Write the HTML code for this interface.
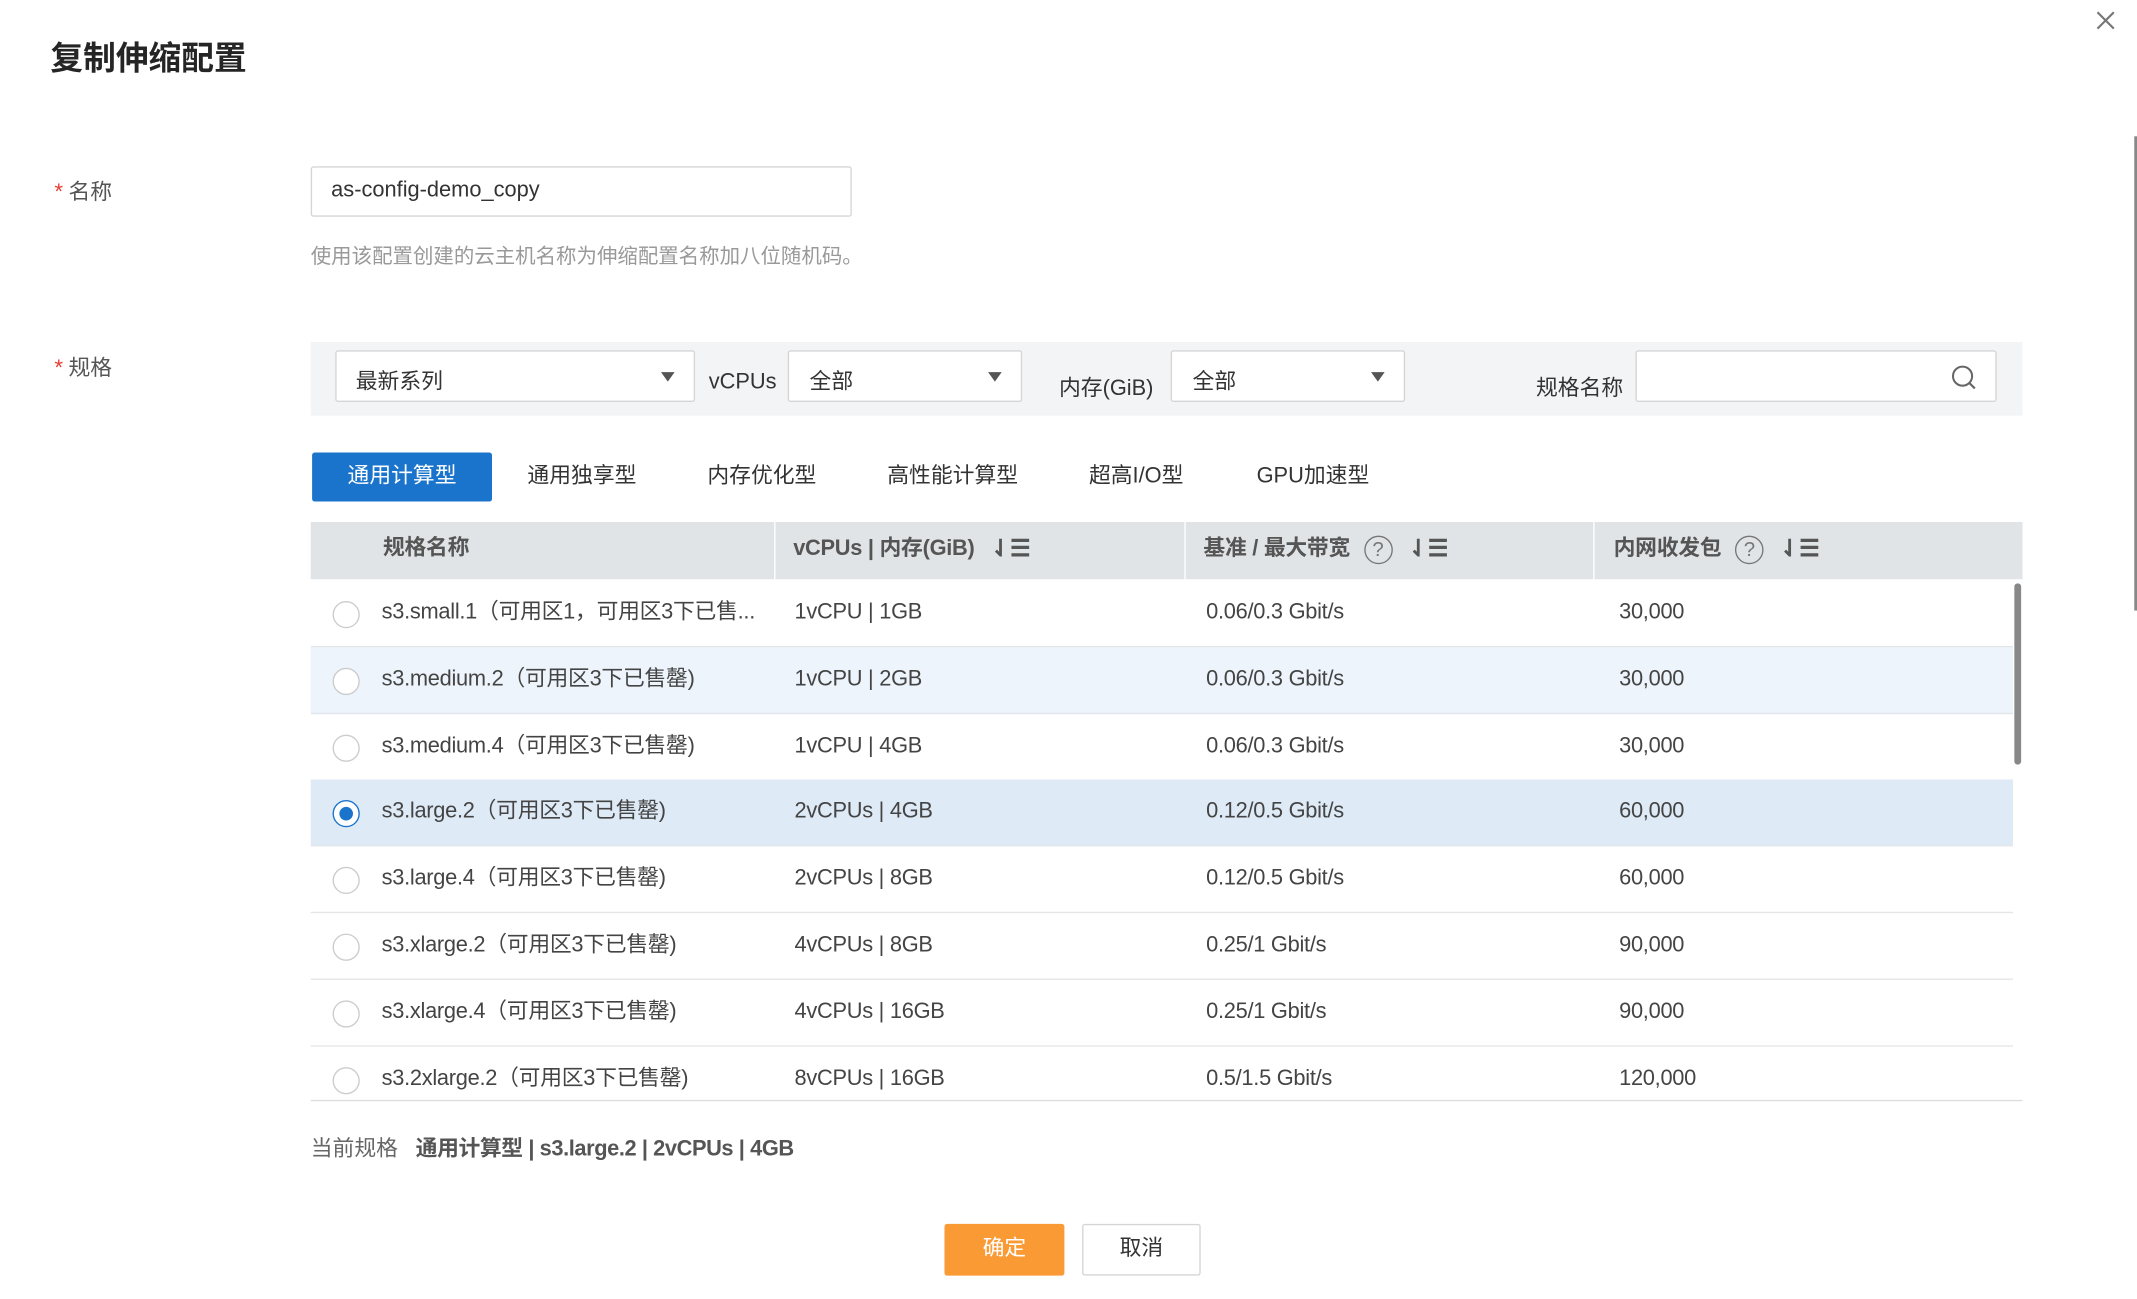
<!DOCTYPE html>
<html><head><meta charset="utf-8">
<style>
html,body{margin:0;padding:0;background:#fff;width:2137px;height:1299px;overflow:hidden}
#w{position:absolute;left:0;top:0;width:1568px;height:953px;transform:scale(1.36288);transform-origin:0 0;font-family:"Liberation Sans","Noto Sans CJK SC",sans-serif;color:#333}
.a{position:absolute;white-space:nowrap}
.lbl{font-size:16px;color:#555}
.req{color:#e8392f;margin-right:4px}
.box{position:absolute;background:#fff;border:1px solid #d5d5d5;border-radius:2px;box-sizing:border-box}
.arr{position:absolute;width:0;height:0;border-left:5px solid transparent;border-right:5px solid transparent;border-top:7px solid #555}
.tab{position:absolute;top:332px;height:36px;line-height:36px;font-size:16px;color:#333}
.th{position:absolute;top:383px;height:42px;line-height:40px;font-size:16px;font-weight:bold;color:#555;letter-spacing:-0.2px}
.row{position:absolute;left:228px;width:1249px;height:48px;border-bottom:1px solid #e3e6e8;font-size:16px;color:#444;letter-spacing:-0.2px}
.row span{position:absolute;top:0;line-height:47px}
.rad{position:absolute;left:16px;top:15px;width:18px;height:18px;border:1px solid #ccc;border-radius:50%;background:#fff}
.q{display:inline-block;width:19px;height:19px;border:1.5px solid #777;border-radius:50%;font-size:15px;line-height:19px;text-align:center;font-weight:normal;color:#777;vertical-align:middle;margin-left:10px;box-sizing:content-box}
.s{display:inline-block;vertical-align:middle;margin-left:12px;font-size:17px}
</style></head><body><div id="w">
<div class="a" style="left:37px;top:23px;font-size:24px;font-weight:bold;color:#252525">复制伸缩配置</div>
<svg class="a" style="left:1538px;top:8px" width="14" height="14" viewBox="0 0 14 14"><path d="M1 1L13 13M13 1L1 13" stroke="#777" stroke-width="1.6"/></svg>
<div class="a" style="left:1566px;top:100px;width:2px;height:348px;background:#888"></div>

<div class="a lbl" style="left:40px;top:127px"><span class="req">*</span>名称</div>
<div class="box" style="left:228px;top:122px;width:397px;height:37px"></div>
<div class="a" style="left:243px;top:131px;font-size:16px;color:#333">as-config-demo_copy</div>
<div class="a" style="left:228px;top:177px;font-size:15px;color:#999">使用该配置创建的云主机名称为伸缩配置名称加八位随机码。</div>

<div class="a lbl" style="left:40px;top:256px"><span class="req">*</span>规格</div>
<div class="a" style="left:228px;top:251px;width:1256px;height:54px;background:#f3f4f6"></div>
<div class="box" style="left:246px;top:257px;width:264px;height:38px"></div>
<div class="a" style="left:261px;top:266px;font-size:16px">最新系列</div><div class="arr" style="left:485px;top:273px"></div>
<div class="a" style="left:520px;top:272px;font-size:16px">vCPUs</div>
<div class="box" style="left:578px;top:257px;width:172px;height:38px"></div>
<div class="a" style="left:594px;top:266px;font-size:16px">全部</div><div class="arr" style="left:725px;top:273px"></div>
<div class="a" style="left:777px;top:271px;font-size:16px">内存(GiB)</div>
<div class="box" style="left:859px;top:257px;width:172px;height:38px"></div>
<div class="a" style="left:875px;top:266px;font-size:16px">全部</div><div class="arr" style="left:1006px;top:273px"></div>
<div class="a" style="left:1127px;top:271px;font-size:16px">规格名称</div>
<div class="box" style="left:1200px;top:257px;width:265px;height:38px"></div>
<svg class="a" style="left:1431px;top:267px" width="20" height="20" viewBox="0 0 20 20"><circle cx="9" cy="9" r="7" fill="none" stroke="#666" stroke-width="1.5"/><path d="M14 14L18 18" stroke="#666" stroke-width="1.6"/></svg>

<div class="tab" style="left:229px;width:132px;background:#1a74cc;color:#fff;text-align:center;border-radius:2px">通用计算型</div>
<div class="tab" style="left:387px">通用独享型</div>
<div class="tab" style="left:519px">内存优化型</div>
<div class="tab" style="left:651px">高性能计算型</div>
<div class="tab" style="left:799px">超高I/O型</div>
<div class="tab" style="left:922px">GPU加速型</div>

<div class="a" style="left:228px;top:383px;width:1256px;height:42px;background:#e1e4e6"></div>
<div class="a" style="left:568px;top:383px;width:1px;height:42px;background:#fff"></div>
<div class="a" style="left:869px;top:383px;width:1px;height:42px;background:#fff"></div>
<div class="a" style="left:1169px;top:383px;width:1px;height:42px;background:#fff"></div>
<div class="th" style="left:281px">规格名称</div>
<div class="th" style="left:582px">vCPUs | 内存(GiB)<span class="s">⇃☰</span></div>
<div class="th" style="left:883px">基准 / 最大带宽<span class="q">?</span><span class="s">⇃☰</span></div>
<div class="th" style="left:1184px">内网收发包<span class="q">?</span><span class="s">⇃☰</span></div>

<div class="row" style="top:426px"><div class="rad"></div><span style="left:52px">s3.small.1（可用区1，可用区3下已售...</span><span style="left:355px">1vCPU | 1GB</span><span style="left:657px">0.06/0.3 Gbit/s</span><span style="left:960px">30,000</span></div>
<div class="row" style="top:475px;background:#edf4fc"><div class="rad"></div><span style="left:52px">s3.medium.2（可用区3下已售罄)</span><span style="left:355px">1vCPU | 2GB</span><span style="left:657px">0.06/0.3 Gbit/s</span><span style="left:960px">30,000</span></div>
<div class="row" style="top:524px"><div class="rad"></div><span style="left:52px">s3.medium.4（可用区3下已售罄)</span><span style="left:355px">1vCPU | 4GB</span><span style="left:657px">0.06/0.3 Gbit/s</span><span style="left:960px">30,000</span></div>
<div class="row" style="top:572px;background:#deeaf6"><div class="rad" style="border-color:#1a74cc"><div style="position:absolute;left:4px;top:4px;width:10px;height:10px;border-radius:50%;background:#1a74cc"></div></div><span style="left:52px">s3.large.2（可用区3下已售罄)</span><span style="left:355px">2vCPUs | 4GB</span><span style="left:657px">0.12/0.5 Gbit/s</span><span style="left:960px">60,000</span></div>
<div class="row" style="top:621px"><div class="rad"></div><span style="left:52px">s3.large.4（可用区3下已售罄)</span><span style="left:355px">2vCPUs | 8GB</span><span style="left:657px">0.12/0.5 Gbit/s</span><span style="left:960px">60,000</span></div>
<div class="row" style="top:670px"><div class="rad"></div><span style="left:52px">s3.xlarge.2（可用区3下已售罄)</span><span style="left:355px">4vCPUs | 8GB</span><span style="left:657px">0.25/1 Gbit/s</span><span style="left:960px">90,000</span></div>
<div class="row" style="top:719px"><div class="rad"></div><span style="left:52px">s3.xlarge.4（可用区3下已售罄)</span><span style="left:355px">4vCPUs | 16GB</span><span style="left:657px">0.25/1 Gbit/s</span><span style="left:960px">90,000</span></div>
<div class="row" style="top:768px;height:40px;border:none"><div class="rad"></div><span style="left:52px">s3.2xlarge.2（可用区3下已售罄)</span><span style="left:355px">8vCPUs | 16GB</span><span style="left:657px">0.5/1.5 Gbit/s</span><span style="left:960px">120,000</span></div>
<div class="a" style="left:228px;top:807px;width:1256px;height:1px;background:#ddd"></div>
<div class="a" style="left:1478px;top:428px;width:5px;height:133px;border-radius:3px;background:#888"></div>

<div class="a" style="left:228px;top:829px;font-size:16px;color:#666">当前规格</div>
<div class="a" style="left:305px;top:829px;font-size:16px;font-weight:bold;color:#555;letter-spacing:-0.3px">通用计算型 | s3.large.2 | 2vCPUs | 4GB</div>

<div class="a" style="left:693px;top:898px;width:88px;height:38px;background:#fa9a35;border-radius:2px;color:#fff;font-size:16px;line-height:38px;text-align:center">确定</div>
<div class="a" style="left:794px;top:898px;width:87px;height:38px;border:1px solid #d5d5d5;box-sizing:border-box;border-radius:2px;color:#333;font-size:16px;line-height:36px;text-align:center">取消</div>
</div></body></html>
